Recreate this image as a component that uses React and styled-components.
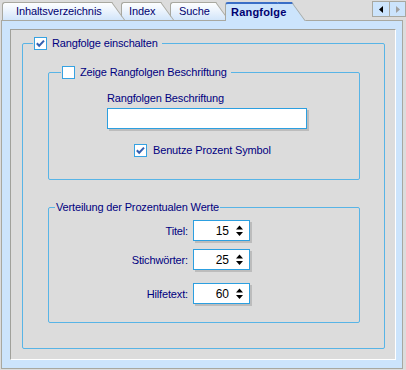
import styled, { createGlobalStyle } from 'styled-components';

const GlobalStyle = createGlobalStyle`
  html, body {
    margin: 0;
    padding: 0;
    background: #dcdcdc;
  }
  body {
    font-family: "Liberation Sans", Arial, sans-serif;
    font-size: 11px;
    color: #000080;
  }
`;

const Window = styled.div`
  width: 406px;
  height: 370px;
  overflow: hidden;
  background: #dcdcdc;
`;

const TabStrip = styled.div`
  position: relative;
  z-index: 2;
  display: flex;
  align-items: flex-end;
  box-sizing: border-box;
  height: 20px;
  padding-left: 2px;
`;

const tabFill = 'linear-gradient(#fdfeff 0%, #eef5fd 40%, #d2e5fa 100%)';

const Tab = styled.div`
  position: relative;
  z-index: ${(p) => p.$z};
  box-sizing: border-box;
  width: ${(p) => p.$width}px;
  height: ${(p) => (p.$active ? 19 : 18)}px;
  margin-right: 10px;
  margin-bottom: ${(p) => (p.$active ? -1 : 0)}px;
  padding-left: ${(p) => p.$pad}px;
  border-left: 1px solid #a8a8a0;
  border-top: ${(p) => (p.$active ? '2px solid #3a6ec6' : '1px solid #a8a8a0')};
  border-top-left-radius: 3px;
  background: ${(p) => (p.$active ? '#cce4fc' : tabFill)};
  color: #000070;
  font-weight: ${(p) => (p.$active ? 'bold' : 'normal')};
  letter-spacing: ${(p) => (p.$active ? '0.2px' : '-0.1px')};
  line-height: 16px;
  white-space: nowrap;

  &::after {
    content: '';
    position: absolute;
    z-index: -1;
    top: ${(p) => (p.$active ? -2 : -1)}px;
    bottom: 0;
    left: calc(100% - 14px);
    width: 14px;
    background: inherit;
    border-top: inherit;
    border-right: 1px solid #a8a8a0;
    transform: skewX(36deg);
    transform-origin: top left;
  }
`;

const Nav = styled.div`
  display: flex;
  align-self: flex-start;
  margin: 1px 0 0 auto;
`;

const NavButton = styled.div`
  box-sizing: border-box;
  width: ${(p) => p.$w}px;
  height: 16px;
  border: 1px solid #a8a8a0;
  background: #cce4fc;
  display: flex;
  align-items: center;
  justify-content: center;

  & + & {
    margin-left: -1px;
  }
`;

const Sheet = styled.div`
  box-sizing: border-box;
  display: flex;
  width: 402px;
  height: 349px;
  margin-left: 1px;
  border: 1px solid #a8a8a0;
  background: #cce4fc;
  padding: 8px 6px 8px 8px;
`;

const Page = styled.div`
  flex: 1;
  display: flex;
  flex-direction: column;
  border: 1px solid #ffffff;
  border-top-color: #a0a09a;
  border-left-color: #a0a09a;
  background: #dcdcdc;
  padding: 7px 10px 10px 11px;
`;

const Group = styled.fieldset`
  margin: ${(p) => p.$mt || 0}px 0 0;
  padding: 0;
  min-width: 0;
  border: 1px solid #58b4e6;
  border-radius: 2px;
`;

const Legend = styled.legend`
  display: flex;
  align-items: center;
  gap: 5px;
  height: 13px;
  line-height: 13px;
  margin-left: ${(p) => p.$indent}px;
  padding: 0 ${(p) => p.$padR}px 0 1px;
  color: #000080;
  letter-spacing: -0.15px;
  white-space: nowrap;
`;

const Body = styled.div`
  display: flex;
  flex-direction: column;
  align-items: ${(p) => p.$align || 'stretch'};
  padding: ${(p) => p.$pad};
`;

const Box = styled.span`
  box-sizing: border-box;
  display: inline-flex;
  flex: none;
  width: 13px;
  height: 13px;
  border: 1px solid #36a2e2;
  background: #ffffff;
`;

const Label = styled.span`
  display: block;
  height: 13px;
  line-height: 13px;
  color: #000080;
  letter-spacing: -0.15px;
  white-space: nowrap;
`;

const TextField = styled.input`
  box-sizing: border-box;
  width: 200px;
  height: 21px;
  margin: 3px 0 0;
  padding: 0 3px;
  border: 1px solid #2c9fe0;
  background: #ffffff;
  box-shadow: 2px 2px 0 #bcbcbc;
  outline: none;
  font: inherit;
`;

const CheckRow = styled.label`
  display: flex;
  align-items: center;
  gap: 6px;
  margin: 15px 0 0 27px;
  height: 13px;
  line-height: 13px;
  color: #000080;
  letter-spacing: -0.15px;
`;

const Row = styled.div`
  display: grid;
  grid-template-columns: 139px 57px;
  column-gap: 5px;
  align-items: center;
  margin-top: ${(p) => p.$mt}px;
`;

const RowLabel = styled.span`
  text-align: right;
  color: #000080;
  letter-spacing: -0.15px;
`;

const Spin = styled.div`
  box-sizing: border-box;
  display: flex;
  align-items: center;
  justify-content: flex-end;
  gap: 7px;
  width: 57px;
  height: 21px;
  padding-right: 6px;
  border: 1px solid #2c9fe0;
  background: #ffffff;
  box-shadow: 2px 2px 0 #bcbcbc;
  color: #000000;
  font-size: 12px;
`;

const Check = ({ on }) => (
  <Box>
    {on && (
      <svg width="11" height="11" viewBox="0 0 11 11">
        <path d="M1.8 5.2 L4.2 7.8 L9 2.6" fill="none" stroke="#3560b0" strokeWidth="2" />
      </svg>
    )}
  </Box>
);

const SpinArrows = () => (
  <svg width="7" height="12" viewBox="0 0 7 12">
    <path d="M3.5 0.5 L7 4.5 L0 4.5 Z" fill="#000" />
    <path d="M0 7 L7 7 L3.5 11 Z" fill="#000" />
  </svg>
);

const SpinField = ({ label, value, mt }) => (
  <Row $mt={mt}>
    <RowLabel>{label}</RowLabel>
    <Spin>
      <span>{value}</span>
      <SpinArrows />
    </Spin>
  </Row>
);

const tabs = [
  { title: 'Inhaltsverzeichnis', width: 109, pad: 13, z: 4 },
  { title: 'Index', width: 39, pad: 7, z: 3 },
  { title: 'Suche', width: 45, pad: 8, z: 2 },
  { title: 'Rangfolge', width: 66, pad: 5, z: 5, active: true },
];

export default function App() {
  return (
    <>
      <GlobalStyle />
      <Window>
        <TabStrip>
          {tabs.map((t) => (
            <Tab key={t.title} $width={t.width} $pad={t.pad} $z={t.z} $active={t.active}>
              {t.title}
            </Tab>
          ))}
          <Nav>
            <NavButton $w={18}>
              <svg width="4" height="7" viewBox="0 0 4 7">
                <path d="M4 0 L0 3.5 L4 7 Z" fill="#000" />
              </svg>
            </NavButton>
            <NavButton $w={17}>
              <svg width="4" height="7" viewBox="0 0 4 7">
                <path d="M0 0 L4 3.5 L0 7 Z" fill="#a0a0a0" />
              </svg>
            </NavButton>
          </Nav>
        </TabStrip>
        <Sheet>
          <Page>
            <Group>
              <Legend $indent={10} $padR={4}>
                <Check on />
                Rangfolge einschalten
              </Legend>
              <Body $pad="16px 24px 25px 25px">
                <Group>
                  <Legend $indent={12} $padR={4}>
                    <Check />
                    Zeige Rangfolgen Beschriftung
                  </Legend>
                  <Body $pad="13px 0 22px 58px" $align="flex-start">
                    <Label>Rangfolgen Beschriftung</Label>
                    <TextField readOnly />
                    <CheckRow>
                      <Check on />
                      Benutze Prozent Symbol
                    </CheckRow>
                  </Body>
                </Group>
                <Group $mt={21}>
                  <Legend $indent={6} $padR={1}>
                    Verteilung der Prozentualen Werte
                  </Legend>
                  <Body $pad="6px 0 18px 0">
                    <SpinField label="Titel:" value="15" mt={0} />
                    <SpinField label="Stichwörter:" value="25" mt={8} />
                    <SpinField label="Hilfetext:" value="60" mt={13} />
                  </Body>
                </Group>
              </Body>
            </Group>
          </Page>
        </Sheet>
      </Window>
    </>
  );
}
